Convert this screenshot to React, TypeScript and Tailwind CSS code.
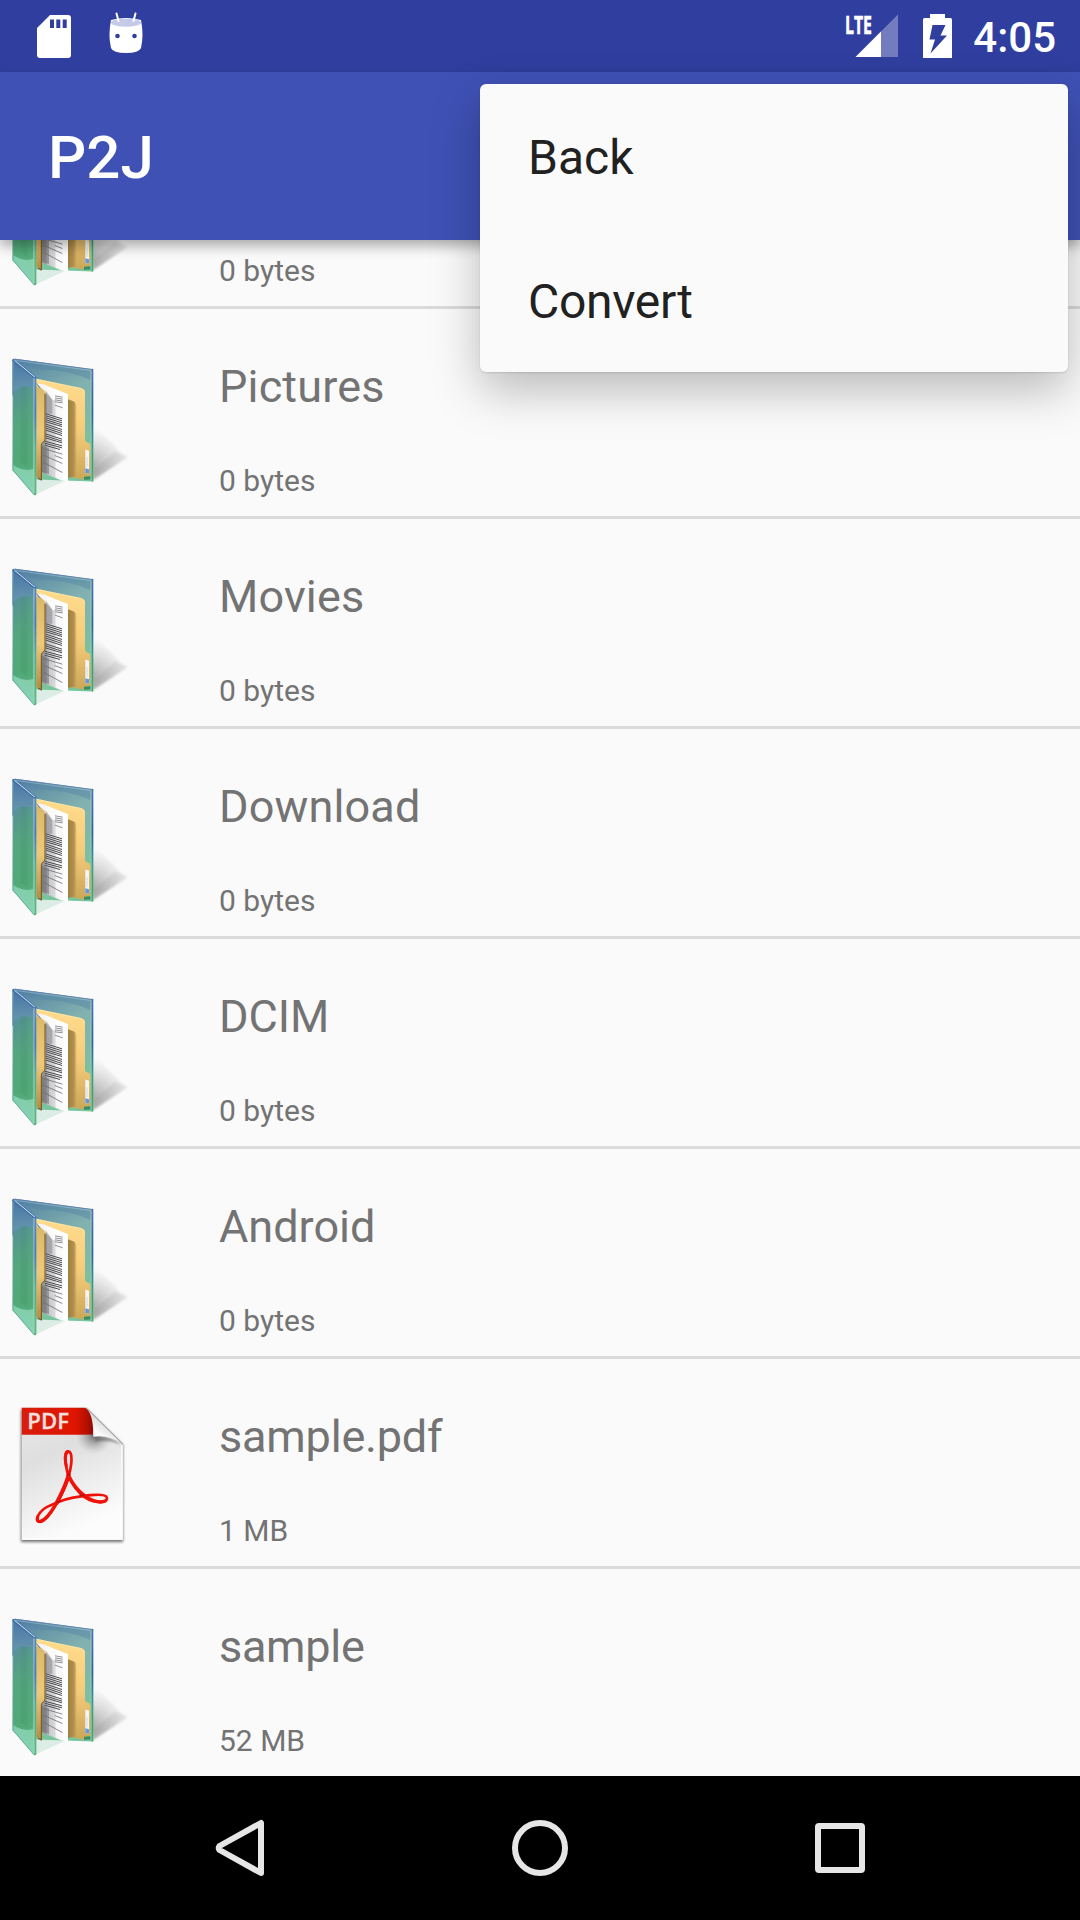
type Entry = { id: string; name: string; size: string; kind: "folder" | "pdf"; tracking: string };

const wide = "tracking-[0.15px]";
const tight = "tracking-[-0.3px]";

/* The first entry is scrolled under the app bar, so only its size line shows. */
const entries: Entry[] = [
  { id: "0", name: "", size: "0 bytes", kind: "folder", tracking: wide },
  { id: "1", name: "Pictures", size: "0 bytes", kind: "folder", tracking: wide },
  { id: "2", name: "Movies", size: "0 bytes", kind: "folder", tracking: wide },
  { id: "3", name: "Download", size: "0 bytes", kind: "folder", tracking: wide },
  { id: "4", name: "DCIM", size: "0 bytes", kind: "folder", tracking: "" },
  { id: "5", name: "Android", size: "0 bytes", kind: "folder", tracking: "" },
  { id: "6", name: "sample.pdf", size: "1 MB", kind: "pdf", tracking: "tracking-[-0.2px]" },
  { id: "7", name: "sample", size: "52 MB", kind: "folder", tracking: tight },
];

/* Gradients and filters shared by every file icon. */
function IconDefs() {
  return (
    <svg width="0" height="0" className="absolute">
      <defs>
        <linearGradient id="f-back" x1="0" y1="0" x2="0.35" y2="1">
          <stop offset="0" stopColor="#4d7aa6" />
          <stop offset="0.2" stopColor="#6796a8" />
          <stop offset="0.45" stopColor="#82b1b0" />
          <stop offset="1" stopColor="#78c49c" />
        </linearGradient>
        <linearGradient id="f-edge" gradientUnits="userSpaceOnUse" x1="0" y1="70" x2="0" y2="450">
          <stop offset="0" stopColor="#4a78b4" />
          <stop offset="0.35" stopColor="#2b5fa8" />
          <stop offset="0.6" stopColor="#3f9c84" />
          <stop offset="0.8" stopColor="#45a560" />
          <stop offset="1" stopColor="#4aae76" />
        </linearGradient>
        <linearGradient id="f-front" x1="0" y1="0" x2="0" y2="1">
          <stop offset="0" stopColor="#4a74a4" />
          <stop offset="0.2" stopColor="#6292ae" />
          <stop offset="0.5" stopColor="#60a98f" />
          <stop offset="0.75" stopColor="#5aae84" />
          <stop offset="1" stopColor="#79cba6" />
        </linearGradient>
        <linearGradient id="f-inner" x1="0" y1="0" x2="0.3" y2="1">
          <stop offset="0" stopColor="#4d8b91" />
          <stop offset="0.4" stopColor="#50a373" />
          <stop offset="1" stopColor="#4ba66f" />
        </linearGradient>
        <linearGradient id="f-yellow" x1="0" y1="0" x2="0" y2="1">
          <stop offset="0" stopColor="#ffdc8c" />
          <stop offset="0.5" stopColor="#f5cc7c" />
          <stop offset="1" stopColor="#cba758" />
        </linearGradient>
        <linearGradient id="f-flap" x1="0" y1="0" x2="0" y2="1">
          <stop offset="0" stopColor="#d9b966" />
          <stop offset="0.5" stopColor="#efc97a" />
          <stop offset="1" stopColor="#b28b40" />
        </linearGradient>
        <linearGradient id="f-brown" x1="0" y1="0" x2="1" y2="0">
          <stop offset="0" stopColor="#9a7a3c" />
          <stop offset="0.75" stopColor="#b28f4c" />
          <stop offset="1" stopColor="#c6a25a" stopOpacity="0.5" />
        </linearGradient>
        <linearGradient id="f-paper" x1="0" y1="0" x2="1" y2="0">
          <stop offset="0" stopColor="#808083" />
          <stop offset="0.32" stopColor="#a3a3a6" />
          <stop offset="0.36" stopColor="#c6c6c9" />
          <stop offset="0.58" stopColor="#d8d8db" />
          <stop offset="0.64" stopColor="#f6f6f8" />
          <stop offset="1" stopColor="#ffffff" />
        </linearGradient>
        <radialGradient id="f-shadow" gradientUnits="userSpaceOnUse" cx="270" cy="370" r="125">
          <stop offset="0" stopColor="#6c6c6c" stopOpacity="0.62" />
          <stop offset="0.5" stopColor="#888" stopOpacity="0.32" />
          <stop offset="1" stopColor="#aaa" stopOpacity="0" />
        </radialGradient>
        <filter id="f-blur" x="-20%" y="-20%" width="140%" height="140%">
          <feGaussianBlur stdDeviation="5" />
        </filter>
        <filter id="f-soft" x="-30%" y="-30%" width="160%" height="160%">
          <feGaussianBlur stdDeviation="2.5" />
        </filter>
        <linearGradient id="p-page" x1="0" y1="0" x2="0.35" y2="1">
          <stop offset="0" stopColor="#e9e9e9" />
          <stop offset="0.4" stopColor="#dfdfdf" />
          <stop offset="1" stopColor="#fcfcfc" />
        </linearGradient>
        <linearGradient id="p-red" x1="0" y1="0" x2="1" y2="0">
          <stop offset="0" stopColor="#d81d0c" />
          <stop offset="0.75" stopColor="#df1500" />
          <stop offset="0.92" stopColor="#b01000" />
          <stop offset="1" stopColor="#8a0a00" />
        </linearGradient>
        <linearGradient id="p-curl" x1="0" y1="1" x2="0.6" y2="0.2">
          <stop offset="0" stopColor="#ffffff" />
          <stop offset="0.45" stopColor="#fafafa" />
          <stop offset="1" stopColor="#c4c4c4" />
        </linearGradient>
        <radialGradient id="p-fold" gradientUnits="userSpaceOnUse" cx="282" cy="122" r="56">
          <stop offset="0" stopColor="#444" stopOpacity="0.75" />
          <stop offset="0.5" stopColor="#777" stopOpacity="0.4" />
          <stop offset="1" stopColor="#aaa" stopOpacity="0" />
        </radialGradient>
      </defs>
    </svg>
  );
}

function FolderIcon() {
  return (
    <svg viewBox="0 -1.5 420 480" className="h-[160px] w-[140px] shrink-0">
      <path d="M272 235 Q320 275 380 338 L278 404Z" fill="url(#f-shadow)" filter="url(#f-soft)" />
      <path d="M278 375 L345 318 L384 334 L278 404Z" fill="#777" opacity="0.14" filter="url(#f-soft)" />
      {/* floor reflection */}
      <path d="M108 400 L205 402 L108 446Z" fill="#dcede6" />
      {/* back cover */}
      <path d="M44 40 L278 71 L278 408 L108 402 L44 360Z" fill="url(#f-back)" />
      <path d="M108 72 Q200 70 272 104 V76 L60 46Z" fill="#5585a4" opacity="0.45" />
      <path d="M44 41 L276 72" stroke="#5f84b0" strokeWidth="3" />
      <path d="M48 45 L272 75" stroke="#a9c9d8" strokeWidth="1.5" />
      <path d="M273 76 V405" stroke="#a6d1c9" strokeWidth="2" />
      <path d="M275 70 H280 V408 H275Z" fill="url(#f-edge)" />
      {/* yellow folder */}
      <path
        d="M108 100 L244 128 Q255 131 255 143 L255 282 Q256 290 263 291 Q271 293 271 300 V391 L255 395 L250 402 L185 390 L108 380Z"
        fill="url(#f-yellow)"
      />
      <path d="M108 101 L244 129 Q254 132 254 143" fill="none" stroke="#ffebb0" strokeWidth="2" />
      <path d="M200 160 L222 168 Q229 172 229 182 V392 L198 398Z" fill="url(#f-brown)" />
      <path d="M256 312 L267 316 V383 L256 383Z" fill="#f3f5f8" />
      <path d="M256 368 L267 371 V383 L256 383Z" fill="#6198e8" />
      <path d="M261 336 V363" stroke="#aaa" strokeWidth="2" strokeDasharray="3 2" />
      <path d="M252 394 L271 392 V402 L252 403Z" fill="#3a8b62" />
      {/* paper stack */}
      <path d="M108 113 L130 118 L204 146 V407 L185 405 L124 380 L124 140Z" fill="url(#f-paper)" />
      <path d="M110 113 L132 117 L204 146 L188 152 L158 165 L136 142Z" fill="#fff" opacity="0.9" />
      <path d="M137 134 L157 162 V205 L137 205Z" fill="#77777c" opacity="0.45" />
      <path d="M126 300 L147 308 V386 L126 379Z" fill="#606064" opacity="0.45" />
      <g stroke="#77777b" strokeWidth="2.4">
        <path d="M165 151 L188 155 M165 157 L188 161 M165 163 L188 167 M165 169 L188 172 M165 179 L188 187" />
      </g>
      <g stroke="#4c4c50" strokeWidth="3">
        <path d="M138 205 L186 220 M138 211 L186 226 M138 217 L186 232 M138 223 L186 238 M138 229 L186 243" />
        <path d="M138 236 L186 252 M138 242 L186 258 M138 248 L186 264 M138 254 L186 270" />
        <path d="M136 265 L186 281 M136 271 L186 287 M136 277 L186 292" />
        <path d="M134 287 L186 301 M134 293 L186 307 M134 299 L180 312" />
      </g>
      <path d="M130 309 L187 326 M164 330 L187 339 M130 329 L187 354 M130 350 L187 381" stroke="#6c6c70" strokeWidth="2.4" />
      <path d="M190 147 L204 149 V410 L190 405Z" fill="#fff" opacity="0.8" />
      {/* yellow front flap */}
      <path d="M108 122 L128 131 Q136 135 136 145 V280 Q136 287 130 290 Q125 293 125 300 V405 L108 393Z" fill="url(#f-flap)" />
      <path d="M135 145 V280 Q135 287 129 290 Q124 293 124 300 V404 L114 398" fill="none" stroke="#6d5121" strokeWidth="3" />
      {/* glass front cover */}
      <path d="M40 44 L104 98 V449 L38 374Z" fill="url(#f-front)" />
      <path d="M40 140 Q58 116 98 124 V380 L40 365Z" fill="url(#f-inner)" opacity="0.6" />
      <path d="M62 120 L82 127 V365 L62 350Z" fill="#327c58" opacity="0.12" />
      <path d="M38 358 Q70 380 102 370 V447 L38 374Z" fill="#8bd4b4" opacity="0.8" />
      <path d="M39 43 V374 L102 448" fill="none" stroke="#57a391" strokeWidth="2.5" />
      <path d="M39 43 V150" stroke="#4c79ac" strokeWidth="3" />
      <path d="M41 44 L105 96" stroke="#3e6ea9" strokeWidth="8" strokeLinecap="round" />
      <path d="M43 44 L106 96" stroke="#dbeaf2" strokeWidth="3" />
      <path d="M101 95 H109 V446 L105 450 L101 446Z" fill="url(#f-edge)" />
      <path d="M102 98 V445" stroke="#c6e9dd" strokeWidth="2.5" />
      <path d="M108 100 V443" stroke="#a7d6d0" strokeWidth="1.5" />
    </svg>
  );
}

function PdfIcon() {
  return (
    <svg viewBox="0 0 420 480" className="h-[160px] w-[140px] shrink-0">
      <path d="M63 44 H262 L369 150 V441 H63Z" fill="#000" opacity="0.55" filter="url(#f-blur)" />
      <path d="M65 38 H258 L368 147 V434 H65Z" fill="url(#p-page)" />
      <path d="M366 150 V432 H67" fill="none" stroke="#fff" strokeWidth="4" />
      <path d="M230 119 H340 L366 147 V185 H230Z" fill="url(#p-fold)" />
      <path d="M285 124 Q335 120 366 150 Q330 134 285 140Z" fill="#555" opacity="0.5" filter="url(#f-soft)" />
      <path d="M65 38 H255 Q279 50 280 119 H65Z" fill="url(#p-red)" />
      <path d="M258 38 Q284 50 280 125 Q325 118 368 147Z" fill="url(#p-curl)" />
      <path d="M258 38 L368 147" stroke="#808080" strokeWidth="2.5" />
      <text
        x="82"
        y="102"
        fill="#f3dfdc"
        stroke="#f3dfdc"
        strokeWidth="1"
        fontFamily="Open Sans, sans-serif"
        fontWeight="600"
        fontSize="62"
        textLength="125"
        lengthAdjust="spacingAndGlyphs"
      >
        PDF
      </text>
      <g fill="none" stroke="#f01208" strokeLinecap="round" strokeLinejoin="round">
        <path
          d="M204 239 C196 208 190 169 204 169 C219 169 216 206 207 239 C200 267 185 300 169 327 C151 356 134 381 118 380 C101 376 119 347 143 335 C170 321 210 307 244 304 C285 298 319 297 321 309 C322 326 281 325 255 307 C231 291 215 265 204 239Z"
          strokeWidth="8"
        />
        <path d="M206 239 Q198 270 170 324" strokeWidth="12" />
        <path d="M208 246 Q223 279 257 305" strokeWidth="10" />
        <path d="M165 332 Q140 375 120 380 Q109 380 113 366" strokeWidth="10" />
        <path d="M262 308 Q295 327 316 318" strokeWidth="10" />
        <path d="M199 213 Q191 181 203 170" strokeWidth="9" />
      </g>
      <path d="M200 239 L210 239 M169 322 L182 318 M238 301 L254 301" stroke="#8b1009" strokeWidth="5" opacity="0.55" />
    </svg>
  );
}

function StatusBar() {
  return (
    <div className="flex h-[72px] shrink-0 items-start bg-[#303f9f] pl-[37px] pr-6">
      <svg viewBox="0 0 34 43" className="mt-[14.5px] h-[43px] w-[34px]">
        <path
          fill="#fff"
          fillRule="evenodd"
          d="M13 0H31a3 3 0 0 1 3 3V40a3 3 0 0 1-3 3H3a3 3 0 0 1-3-3V13ZM13 4.5V13h4V4.5ZM19.3 4.5V13h4V4.5ZM25.7 4.5V13h4V4.5Z"
        />
      </svg>
      <svg viewBox="0 0 36 42" className="ml-[37px] mt-3 h-[42px] w-[36px]">
        <path d="M3 8Q18 4 33 8Q36 23 33 36Q31 41 18 41Q5 41 3 36Q0 23 3 8Z" fill="#fff" />
        <ellipse cx="18" cy="10.7" rx="15" ry="4" fill="#c5cae9" />
        <path d="M8.5 1.5 L10.5 9 M27.5 1.5 L25.5 9" stroke="#fff" strokeWidth="2" strokeLinecap="round" />
        <circle cx="9.5" cy="24" r="2.3" fill="#303f9f" />
        <circle cx="26.5" cy="24" r="2.3" fill="#303f9f" />
      </svg>
      <div className="flex-1" />
      <svg viewBox="0 0 54 44" className="mt-[14px] h-[44px] w-[54px] overflow-visible">
        <path d="M53 0.5V43H10.5Z" fill="#fff" opacity="0.32" />
        <path d="M36 17.5V43H10.5Z" fill="#fff" />
        <text
          x="0"
          y="19.6"
          fill="#fff"
          stroke="#fff"
          strokeWidth="0.6"
          fontFamily="Open Sans, sans-serif"
          fontWeight="700"
          fontSize="25.5"
          textLength="27"
          lengthAdjust="spacingAndGlyphs"
        >
          LTE
        </text>
      </svg>
      <svg viewBox="0 0 29 44" className="ml-[24px] mt-[14px] h-[44px] w-[29px]">
        <path
          fill="#fff"
          fillRule="evenodd"
          d="M7 0H22V4H27.5Q29 4 29 5.500V44H0V5.500Q0 4 1.500 4H7ZM9.500 11L6.500 25.500H12L7.500 39.500L24 21.500H17.500L22.500 11Z"
        />
      </svg>
      <span className="ml-[21px] mt-[13px] text-[42px] leading-[50px] font-medium text-white">4:05</span>
    </div>
  );
}

function FileRow({ entry }: { entry: Entry }) {
  return (
    <li className="flex h-[210px] shrink-0 border-b-[3px] border-[#dadada]">
      <div className="pt-9">{entry.kind === "folder" ? <FolderIcon /> : <PdfIcon />}</div>
      <div className="ml-[79px] flex flex-col text-[#737373]">
        <span className={`mt-[51px] h-[54px] text-[45px] leading-[54px] ${entry.tracking}`}>{entry.name}</span>
        <span className="mt-[49px] text-[30px] leading-[36px]">{entry.size}</span>
      </div>
    </li>
  );
}

function NavBar() {
  return (
    <nav className="flex h-36 shrink-0 items-center justify-center gap-[240px] bg-black">
      <svg viewBox="0 0 60 60" className="size-[60px]" fill="none" stroke="#e6e6e6" strokeWidth="6" strokeLinejoin="round">
        <path d="M51 5V55L9.500 32Q8 30 9.500 28Z" />
      </svg>
      <svg viewBox="0 0 60 60" className="size-[60px]" fill="none" stroke="#e6e6e6" strokeWidth="6">
        <circle cx="30" cy="30" r="25" />
      </svg>
      <svg viewBox="0 0 60 60" className="size-[60px]" fill="none" stroke="#e6e6e6" strokeWidth="6">
        <rect x="8" y="8" width="44" height="44" rx="1" />
      </svg>
    </nav>
  );
}

export default function App() {
  return (
    <div className="relative flex h-[1920px] w-[1080px] flex-col overflow-hidden bg-[#fafafa] font-[Roboto,sans-serif]">
      <IconDefs />
      <StatusBar />
      <header className="z-10 flex h-[168px] shrink-0 items-center bg-[#3f51b5] px-12 shadow-[0_6px_12px_rgba(0,0,0,0.32)]">
        <h1 className="mt-1 text-[60px] font-medium text-white">P2J</h1>
      </header>
      <main className="min-h-0 flex-1 overflow-hidden">
        <ul className="-mt-[141px] flex flex-col">
          {entries.map((entry) => (
            <FileRow key={entry.id} entry={entry} />
          ))}
        </ul>
      </main>
      <NavBar />
      <div className="absolute right-3 top-[84px] z-20 flex h-[288px] w-[588px] flex-col rounded-[6px] bg-[#fafafa] text-[48px] text-[#212121] shadow-[0_18px_48px_rgba(0,0,0,0.26),0_1px_2px_rgba(0,0,0,0.12)]">
        <button className="flex h-36 items-center pl-12 pt-1">Back</button>
        <button className="flex h-36 items-center pl-12 pt-1 tracking-[-0.3px]">Convert</button>
      </div>
    </div>
  );
}
